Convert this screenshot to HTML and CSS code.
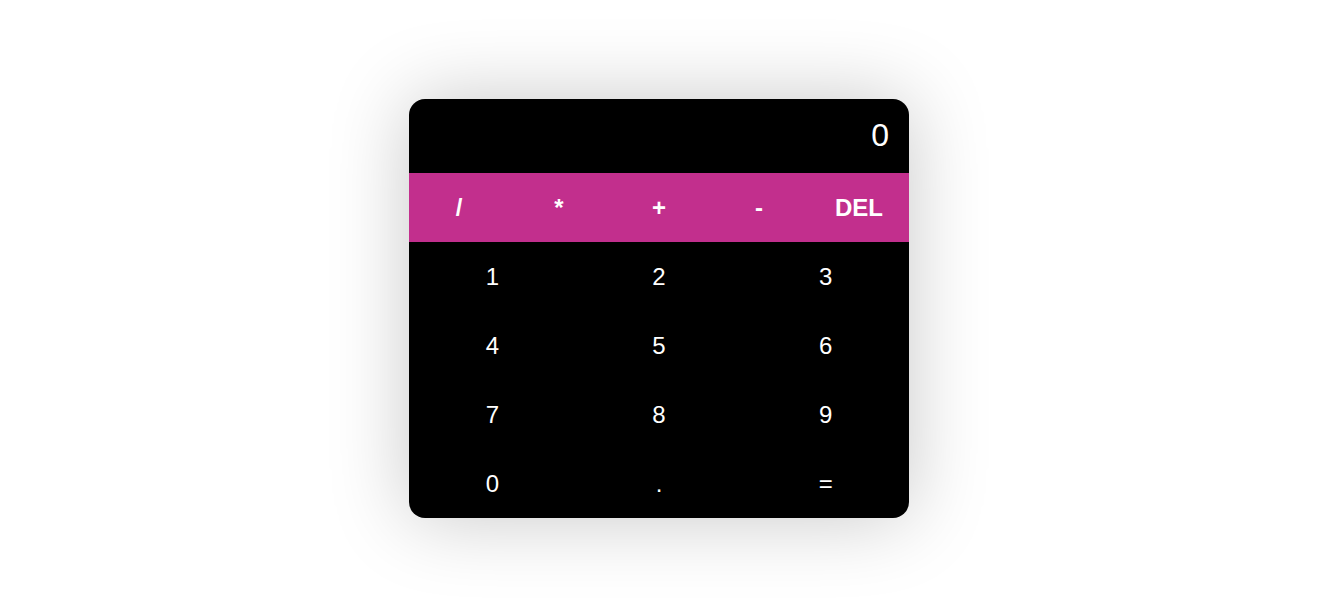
FILE: index.html
```html
<!DOCTYPE html>
<html lang="en">
<head>
<meta charset="utf-8">
<title>Calculator</title>
<link rel="stylesheet" href="styles.css">
</head>
<body>
<div class="page">
  <div class="calculator">
    <div class="display">0</div>
    <div class="operators">
      <button class="op">/</button>
      <button class="op">*</button>
      <button class="op">+</button>
      <button class="op">-</button>
      <button class="op">DEL</button>
    </div>
    <div class="keys">
      <button class="key">1</button>
      <button class="key">2</button>
      <button class="key">3</button>
      <button class="key">4</button>
      <button class="key">5</button>
      <button class="key">6</button>
      <button class="key">7</button>
      <button class="key">8</button>
      <button class="key">9</button>
      <button class="key">0</button>
      <button class="key">.</button>
      <button class="key">=</button>
    </div>
  </div>
</div>
</body>
</html>
```
FILE: styles.css
```css
* { box-sizing: border-box; }
html, body { margin: 0; padding: 0; background: #fff; }
body { font-family: "Liberation Sans", Arial, sans-serif; }
.page {
  display: flex;
  justify-content: center;
  padding: 99px 2px 0 0;
  height: 610px;
}
.calculator {
  width: 500px;
  height: 419px;
  background: #000;
  border-radius: 16px;
  overflow: hidden;
  box-shadow: 0 0 80px rgba(0, 0, 0, 0.22);
}
.display {
  height: 74px;
  display: flex;
  align-items: center;
  justify-content: flex-end;
  padding: 0 20px 2px 0;
  color: #fff;
  font-size: 32px;
}
.operators {
  display: flex;
  height: 69px;
  background: #c22f8d;
}
.op {
  flex: 1;
  border: none;
  background: transparent;
  color: #fff;
  font-family: inherit;
  font-size: 24px;
  font-weight: bold;
  padding: 0;
}
.keys {
  display: grid;
  grid-template-columns: repeat(3, 1fr);
  grid-auto-rows: 69px;
}
.key {
  border: none;
  background: transparent;
  color: #fff;
  font-family: inherit;
  font-size: 24px;
  padding: 0;
}
```
